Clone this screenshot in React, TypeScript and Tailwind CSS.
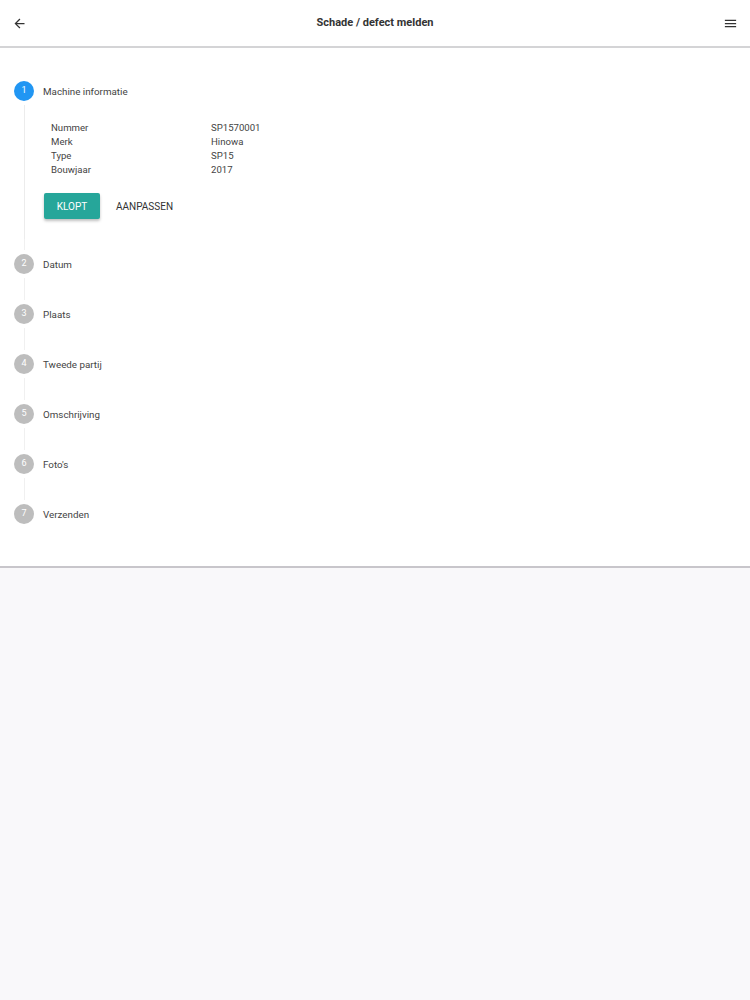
import React from 'react';

const steps = ['Machine informatie', 'Datum', 'Plaats', 'Tweede partij', 'Omschrijving', "Foto's", 'Verzenden'];

const machine: [string, string][] = [
  ['Nummer', 'SP1570001'],
  ['Merk', 'Hinowa'],
  ['Type', 'SP15'],
  ['Bouwjaar', '2017'],
];

const Header: React.FC = () => (
  <div className="h-[48px] flex items-center justify-between px-[12px] bg-white border-b-2 border-[#d4d4d6]">
    <svg width="15" height="15" viewBox="0 0 24 24" className="text-[#333]">
      <path d="M20 11H7.83l5.59-5.59L12 4l-8 8 8 8 1.41-1.41L7.83 13H20v-2z" fill="currentColor" />
    </svg>
    <div className="text-[11px] font-bold text-[#333] pt-[1px]">Schade / defect melden</div>
    <svg width="15" height="15" viewBox="0 0 24 24" className="text-[#333]">
      <path d="M3 18h18v-2H3v2zm0-5h18v-2H3v2zm0-7v2h18V6H3z" fill="currentColor" />
    </svg>
  </div>
);

const Step: React.FC<{ n: number; label: string; active?: boolean; last?: boolean; first?: boolean; children?: React.ReactNode }> = ({
  n,
  label,
  active,
  last,
  first,
  children,
}) => (
  <div className="flex">
    <div className="w-[43px] pl-[14px] flex">
      <div className="w-5 flex flex-col items-center">
        <div className={`h-[11px] w-px ${first ? '' : 'bg-[#f0f0f0]'} mb-[4px]`} />
        <div
          className={`w-5 h-5 rounded-full flex items-center justify-center text-[9px] text-white ${
            active ? 'bg-[#2196f3]' : 'bg-[#bdbdbd]'
          }`}
        >
          {n}
        </div>
        <div className={`flex-1 w-px mt-[4px] ${last ? '' : active ? 'bg-[#ececec]' : 'bg-[#f0f0f0]'}`} />
      </div>
    </div>
    <div className="flex-1">
      <div className="h-[50px] flex items-center pt-[2px] text-[9.8px] text-[#444]">{label}</div>
      {children}
    </div>
  </div>
);

export default function App() {
  return (
    <div className="min-h-[1000px] bg-[#f9f8fa]" style={{ fontFamily: 'Roboto, "Liberation Sans", sans-serif' }}>
      <Header />
      <div className="bg-white pt-[18px] pb-[27px] border-b-2 border-[#c8c6cb]">
        {steps.map((s, i) => (
          <Step key={s} n={i + 1} label={s} active={i === 0} first={i === 0} last={i === steps.length - 1}>
            {i === 0 && (
              <div className="pt-[5px] pb-[20px]">
                <div className="pl-[8px]">
                  {machine.map(([k, v]) => (
                    <div key={k} className="flex text-[9.6px] leading-[14px] text-[#444]">
                      <div className="w-[160px]">{k}</div>
                      <div>{v}</div>
                    </div>
                  ))}
                </div>
                <div className="flex items-center mt-[16px] ml-[1px]">
                  <button className="w-[56px] h-[26px] bg-[#26a69a] text-white text-[10px] rounded-[2px] shadow-[0_2px_3px_rgba(0,0,0,0.25)]">
                    KLOPT
                  </button>
                  <button className="ml-[16px] h-[26px] text-[10px] text-[#333]">AANPASSEN</button>
                </div>
              </div>
            )}
          </Step>
        ))}
      </div>
    </div>
  );
}
